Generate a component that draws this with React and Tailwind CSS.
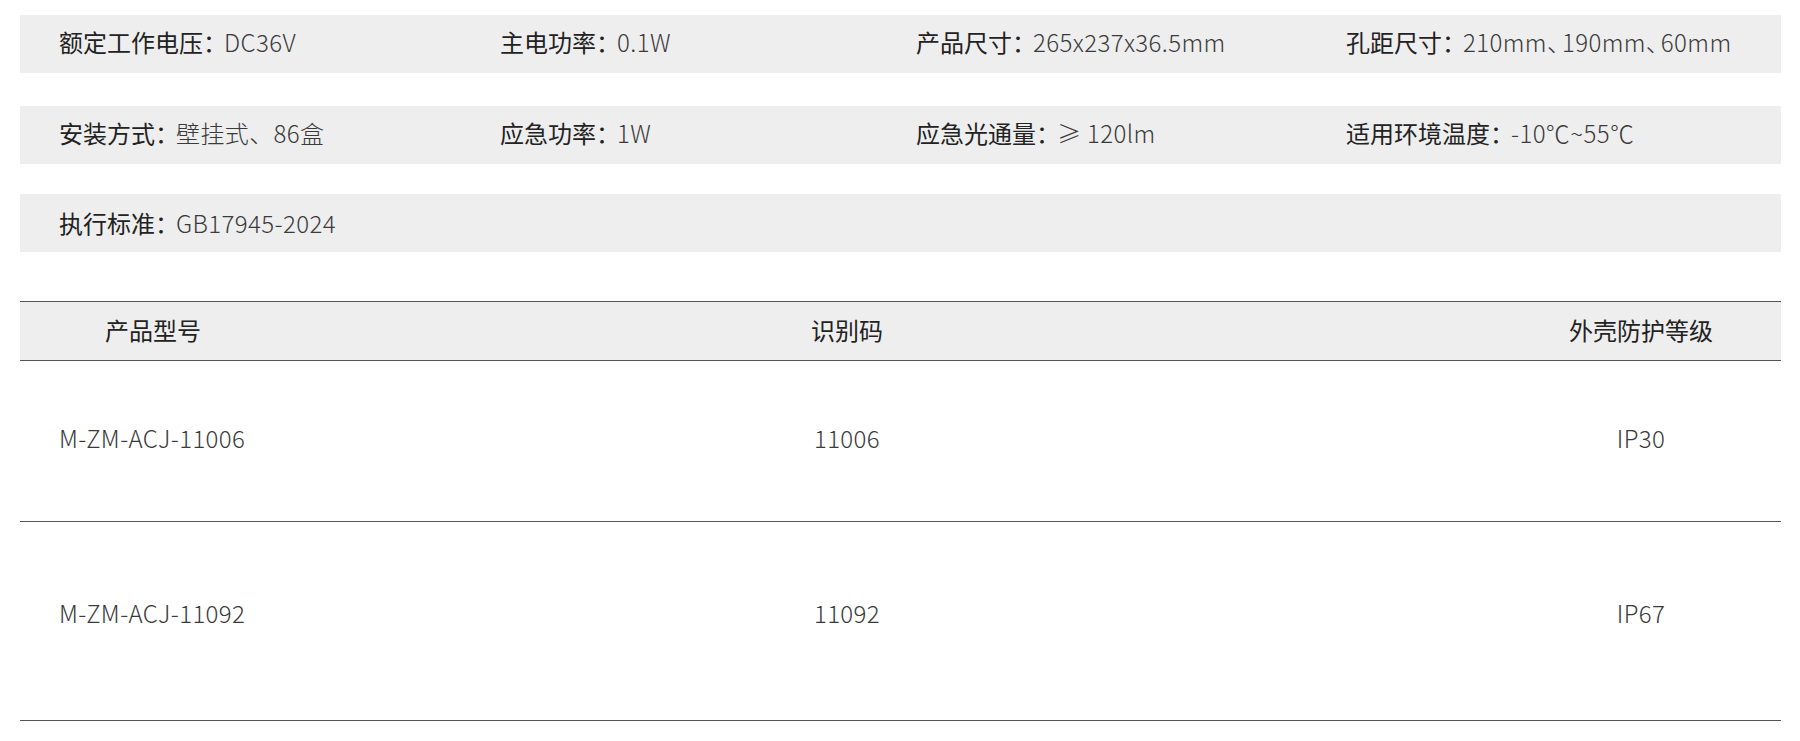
export default function App() {
  const font = { fontFamily: '"Noto Sans CJK SC", "Noto Sans", sans-serif' };
  const Dun = () => <span className="tracking-[-9px]">、</span>;
  const rows = [
    [
      ["额定工作电压：", "DC36V"],
      ["主电功率：", "0.1W"],
      ["产品尺寸：", "265x237x36.5mm"],
      [
        "孔距尺寸：",
        <>
          210mm<Dun />190mm<Dun />60mm
        </>,
      ],
    ],
    [
      ["安装方式：", "壁挂式、86盒"],
      ["应急功率：", "1W"],
      ["应急光通量：", "≥ 120lm"],
      ["适用环境温度：", "-10℃~55℃"],
    ],
    [["执行标准：", "GB17945-2024"]],
  ];
  const Cell = ({ l, v }) => (
    <div className="whitespace-nowrap">
      <span className="font-normal text-[#222]">{l}</span>
      <span className="ml-[-3px] font-light tracking-[0.4px] text-[#3a3a3a]">{v}</span>
    </div>
  );
  return (
    <div className="w-[1800px] h-[741px] bg-white text-[24px] leading-none" style={font}>
      <div className="ml-[20px] w-[1761px] pt-[15px]">
        <div className="grid h-[58px] grid-cols-[441px_416px_430px_1fr] items-center bg-[#eeeeee] pb-[4px] pl-[39px]">
          {rows[0].map(([l, v]) => (
            <Cell key={l} l={l} v={v} />
          ))}
        </div>
        <div className="mt-[33px] grid h-[58px] grid-cols-[441px_416px_430px_1fr] items-center bg-[#eeeeee] pb-[4px] pl-[39px]">
          {rows[1].map(([l, v]) => (
            <Cell key={l} l={l} v={v} />
          ))}
        </div>
        <div className="mt-[30px] grid h-[58px] grid-cols-[441px_416px_430px_1fr] items-center bg-[#eeeeee] pl-[39px]">
          {rows[2].map(([l, v]) => (
            <Cell key={l} l={l} v={v} />
          ))}
        </div>

        <div className="mt-[49px]">
          <div className="grid h-[60px] grid-cols-[567px_520px_1fr_280px] items-center border-y border-[#555] bg-[#eeeeee] pb-[2px] font-normal text-[#222]">
            <div className="pl-[85px]">产品型号</div>
            <div className="text-center">识别码</div>
            <div></div>
            <div className="text-center">外壳防护等级</div>
          </div>
          <div className="grid h-[161px] grid-cols-[567px_520px_1fr_280px] items-center border-b border-[#555] pb-[6px] font-light tracking-[0.4px] text-[#3a3a3a]">
            <div className="pl-[39px]">M-ZM-ACJ-11006</div>
            <div className="text-center">11006</div>
            <div></div>
            <div className="text-center">IP30</div>
          </div>
          <div className="grid h-[199px] grid-cols-[567px_520px_1fr_280px] items-center border-b border-[#555] pb-[16px] font-light tracking-[0.4px] text-[#3a3a3a]">
            <div className="pl-[39px]">M-ZM-ACJ-11092</div>
            <div className="text-center">11092</div>
            <div></div>
            <div className="text-center">IP67</div>
          </div>
        </div>
      </div>
    </div>
  );
}
